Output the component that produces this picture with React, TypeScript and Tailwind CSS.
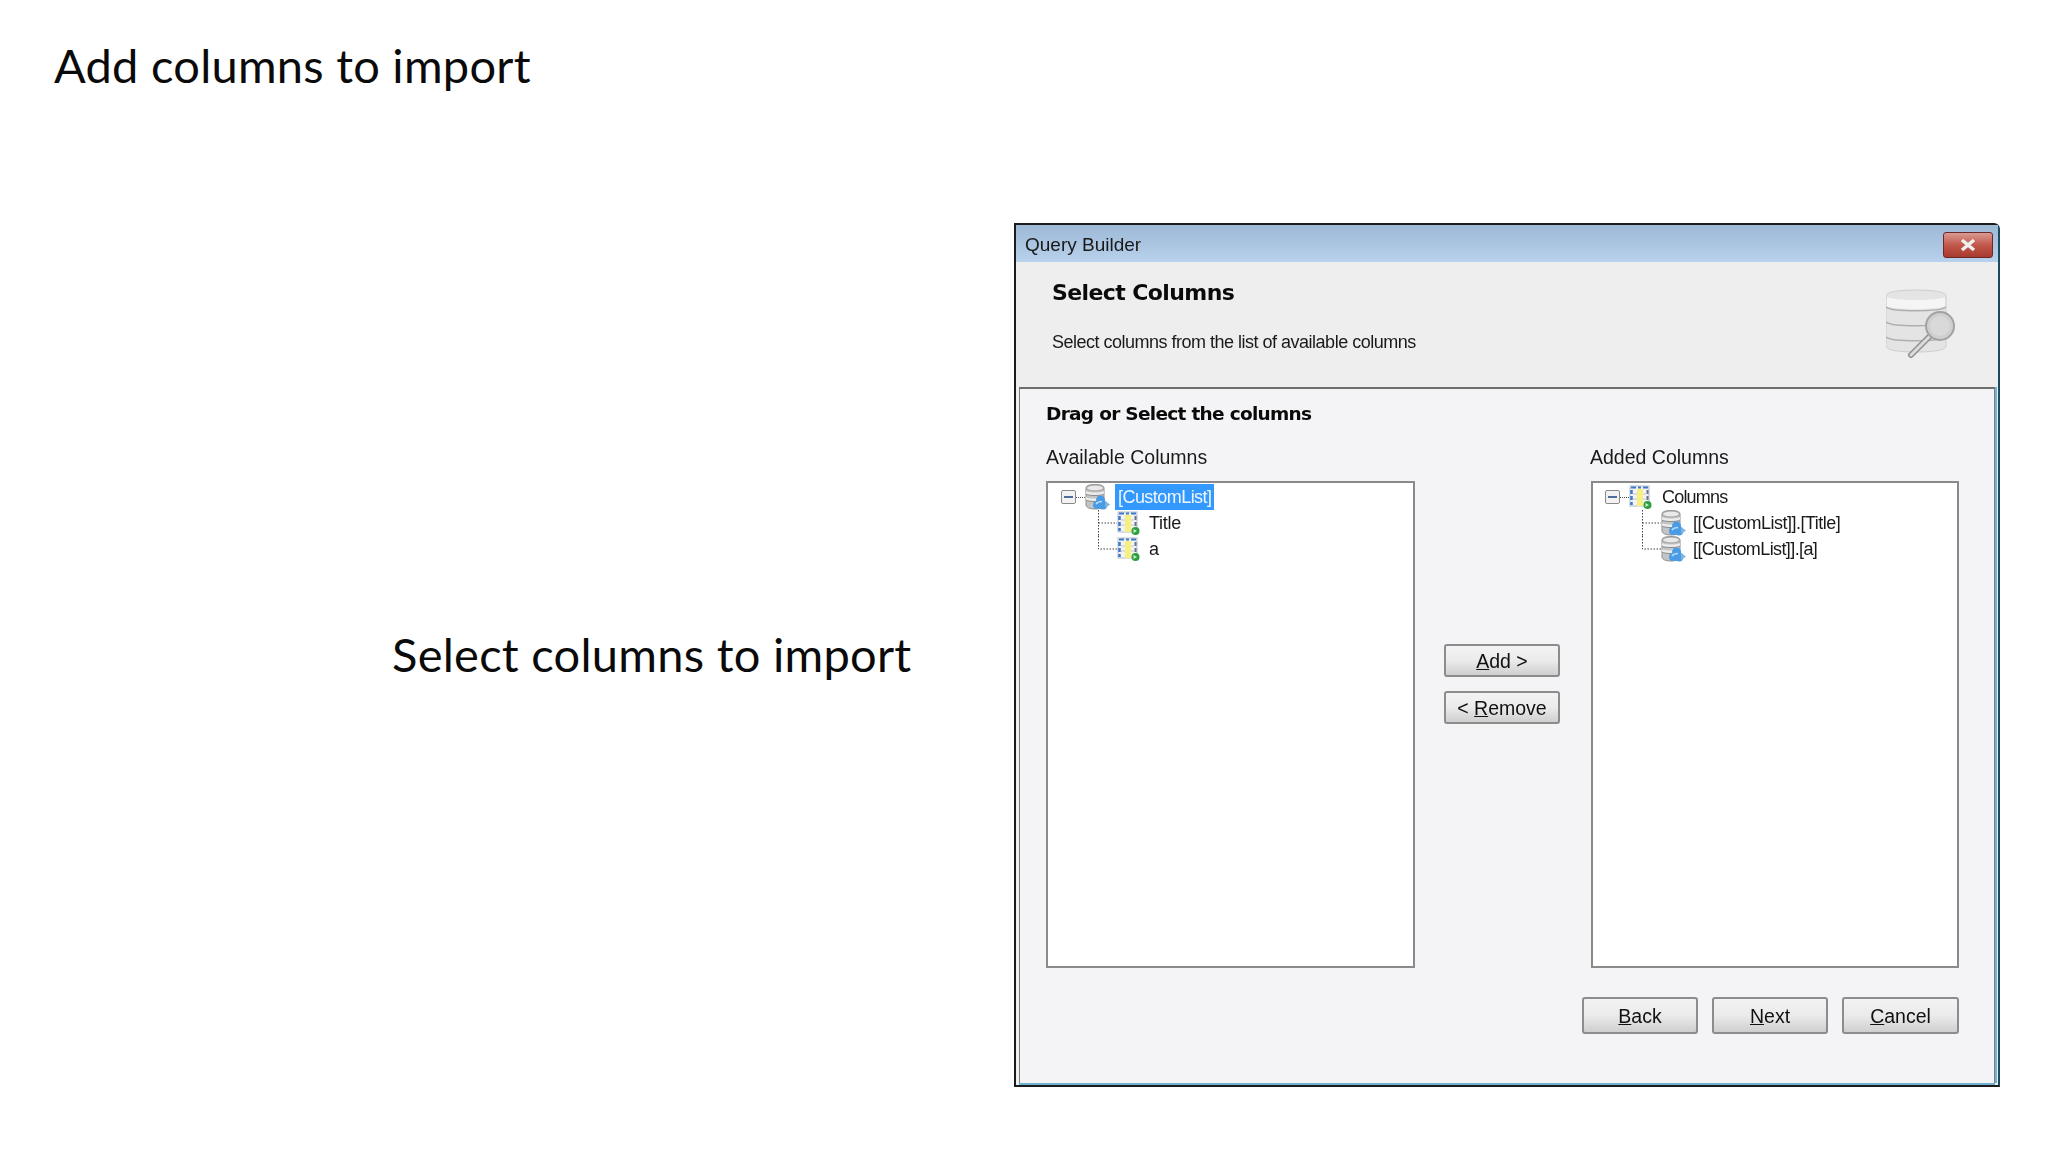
function DbIcon() {
  return (
    <svg width="26" height="26" viewBox="0 0 26 26" className="shrink-0">
      <path d="M1 4c0-2.500 4-3.500 9-3.500s9 1 9 3.500v17c0 2.500-4 4-9 4s-9-1.500-9-4z" fill="#c4c4c4" stroke="#8f8f8f" />
      <ellipse cx="10" cy="4" rx="8.500" ry="3" fill="#e9e9e9" stroke="#a0a0a0" />
      <path d="M1 7v3c2 2 16 2 18 0V7c-2 2-16 2-18 0zM1 13v3c2 2 16 2 18 0v-3c-2 2-16 2-18 0z" fill="#ededed" />
      <path d="M1 10c2 2 16 2 18 0M1 16c2 2 16 2 18 0" fill="none" stroke="#8a8a8a" />
      <circle cx="15.500" cy="16" r="4.500" fill="#4a9be6" />
      <circle cx="12" cy="21" r="4" fill="#4a9be6" />
      <circle cx="18" cy="21" r="4.500" fill="#4a9be6" />
      <path d="M20 17l5 3.500-5 3.500z" fill="#7fb4e0" />
      <path d="M11 20c1-1.500 4-2.500 6-2.500" fill="none" stroke="#b5dcf8" strokeWidth="1.500" />
    </svg>
  )
}

function ColumnIcon() {
  return (
    <svg width="24" height="26" viewBox="0 0 24 26" className="shrink-0">
      <rect x="1" y="2" width="19" height="20" fill="#f1f3f6" stroke="#b3bcc9" />
      <path d="M2 3.500h5M9 3.500h3M14 3.500h5" stroke="#3f78c8" strokeWidth="2" />
      <path d="M2.500 6v4M2.500 12v4M2.500 18v3" stroke="#3f78c8" strokeWidth="2.500" />
      <path d="M18.500 6v4M18.500 12v4" stroke="#6a7687" strokeWidth="2" />
      <rect x="8" y="5" width="6" height="17" fill="#f8f07e" />
      <path d="M4 10h4M4 15h4M14 10h3M14 15h3" stroke="#c2c8d2" />
      <circle cx="18.500" cy="21" r="4" fill="#2f9e3f" />
      <path d="M16.500 19l3.500 2-3.500 2z" fill="#c8f0c8" />
    </svg>
  )
}

function SearchDbIcon() {
  return (
    <svg width="70" height="70" viewBox="0 0 70 70" className="shrink-0">
      <path d="M0 7c0-4 12-6 30-6s30 2 30 6v50c0 4-12 6-30 6S0 61 0 57z" fill="#e4e4e4" stroke="#cdcdcd" />
      <path d="M1 8c4 4 54 4 58 0v9c-4 4-54 4-58 0z" fill="#f5f5f5" />
      <path d="M0 18c6 5 54 5 60 0M0 33c6 5 54 5 60 0M0 48c6 5 54 5 60 0" fill="none" stroke="#afafaf" strokeWidth="1.500" />
      <path d="M44 47 25 66" stroke="#8f8f8f" strokeWidth="6" strokeLinecap="round" />
      <path d="M44 47 25 66" stroke="#dcdcdc" strokeWidth="3" strokeLinecap="round" />
      <circle cx="54" cy="37" r="14" fill="#cfcfcf" stroke="#a2a2a2" strokeWidth="2" />
      <circle cx="54" cy="37" r="10" fill="#d9d9d9" />
    </svg>
  )
}

function Expander() {
  return (
    <span className="flex h-[14px] w-[15px] shrink-0 items-center justify-center rounded-[2px] border border-[#8a8a8a] bg-[#f2f2f2]">
      <span className="h-[2px] w-[9px] bg-[#4d6d9a]" />
    </span>
  )
}

// dotted elbow from the parent icon down to a child row
function Connector({ last }: { last?: boolean }) {
  return (
    <svg width="19" height="26" viewBox="0 0 19 26" className="shrink-0">
      <path d={last ? 'M0.500 0V13H19' : 'M0.500 0V26M0.500 13H19'} fill="none" stroke="#444" strokeDasharray="1.500 1.500" />
    </svg>
  )
}

function WinButton({ children, className }: { children: React.ReactNode; className: string }) {
  return (
    <button className={`flex items-center justify-center rounded-[3px] border-2 border-[#8c8c8c] bg-gradient-to-b from-[#f3f3f3] via-[#ebebeb] to-[#cfcfcf] pt-[3px] text-[19.5px] text-[#111] ${className}`}>
      {children}
    </button>
  )
}

export default function App() {
  return (
    <div className="relative h-[1152px] w-[2048px] overflow-hidden bg-white font-['Liberation_Sans',sans-serif]">
      <h1 className="pl-[54px] pt-[33px] font-['Lato',sans-serif] text-[47px] font-normal leading-[64px] tracking-[0.25px] text-[#0a0a0a]">
        Add columns to import
      </h1>

      <div className="mt-[126px] flex items-center">
        <p className="ml-[392px] w-[622px] pb-[2px] font-['Lato',sans-serif] text-[47px] leading-[62px] tracking-[0.27px] text-[#0a0a0a]">
          Select columns to import
        </p>

        {/* Query Builder window */}
        <div className="flex h-[864px] w-[986px] flex-col rounded-tr-[6px] border-2 border-[#1c1c1c] border-r-[#1b4a5e] bg-[#eff0f2] blur-[0.35px]">
          <div className="flex h-[37px] items-center justify-between bg-gradient-to-b from-[#9db9d6] to-[#b8d1ec] pl-[9px] pr-[5px]">
            <span className="mt-[3px] text-[19px] text-[#1a1a1a]">Query Builder</span>
            <button className="mt-[3px] flex h-[26px] w-[50px] items-center justify-center rounded-[3px] border border-[#6b2a2a] bg-gradient-to-b from-[#d99a92] via-[#c2574b] to-[#a93a2e]">
              <svg width="18" height="14" viewBox="0 0 18 14">
                <path d="M3 2 15 12M15 2 3 12" stroke="#f0f0f0" strokeWidth="3.500" />
              </svg>
            </button>
          </div>

          <div className="flex h-[125px] justify-between bg-[#eeeeef] pl-[36px] pr-[42px]">
            <div>
              <h2 className="pt-[17px] font-['DejaVu_Sans',sans-serif] text-[22px] font-bold leading-[28px] tracking-[-0.6px] text-[#0a0a0a]">
                Select Columns
              </h2>
              <p className="mt-[24px] text-[18px] leading-[22px] tracking-[-0.5px] text-[#1a1a1a]">
                Select columns from the list of available columns
              </p>
            </div>
            <div className="pt-[27px]">
              <SearchDbIcon />
            </div>
          </div>

          <div className="mx-[3px] flex-1 border-x border-t-2 border-x-[#7d7d7d] border-t-[#6d6d6d] bg-[#f4f4f6] pl-[26px] pt-[13px] shadow-[2px_0_0_#6fb3d2]">
            <h3 className="font-['DejaVu_Sans',sans-serif] text-[18.5px] font-bold leading-[24px] tracking-[-0.7px] text-[#0a0a0a]">
              Drag or Select the columns
            </h3>

            <div className="mt-[20px] flex">
              <div className="w-[369px]">
                <div className="text-[19.5px] leading-[22px] text-[#1a1a1a]">Available Columns</div>
                <div className="mt-[13px] h-[487px] border-2 border-[#8a8a8a] bg-white pl-[13px] pt-[1px] text-[18px] text-[#1a1a1a]">
                  <div className="flex h-[26px] items-center">
                    <Expander />
                    <span className="w-[9px] border-t border-dotted border-[#555]" />
                    <DbIcon />
                    <span className="ml-[4px] flex h-[26px] items-center bg-[#3399ff] px-[3px] tracking-[-0.55px] text-[#eef6ff]">[CustomList]</span>
                  </div>
                  <div className="flex h-[26px] items-center pl-[37px]">
                    <Connector />
                    <ColumnIcon />
                    <span className="ml-[8px] tracking-[-0.3px]">Title</span>
                  </div>
                  <div className="flex h-[26px] items-center pl-[37px]">
                    <Connector last />
                    <ColumnIcon />
                    <span className="ml-[8px]">a</span>
                  </div>
                </div>
              </div>

              <div className="ml-[29px] flex w-[116px] flex-col gap-[14px] pt-[198px]">
                <WinButton className="h-[33px] w-[116px]">
                  <span><u>A</u>dd &gt;</span>
                </WinButton>
                <WinButton className="h-[33px] w-[116px]">
                  <span>&lt; <u>R</u>emove</span>
                </WinButton>
              </div>

              <div className="ml-[31px] w-[368px]">
                <div className="-ml-[1px] text-[19.5px] leading-[22px] text-[#1a1a1a]">Added Columns</div>
                <div className="mt-[13px] h-[487px] border-2 border-[#8a8a8a] bg-white pl-[12px] pt-[1px] text-[18px] text-[#1a1a1a]">
                  <div className="flex h-[26px] items-center">
                    <Expander />
                    <span className="w-[9px] border-t border-dotted border-[#555]" />
                    <ColumnIcon />
                    <span className="ml-[9px] tracking-[-0.8px]">Columns</span>
                  </div>
                  <div className="flex h-[26px] items-center pl-[37px]">
                    <Connector />
                    <DbIcon />
                    <span className="ml-[6px] tracking-[-0.5px]">[[CustomList]].[Title]</span>
                  </div>
                  <div className="flex h-[26px] items-center pl-[37px]">
                    <Connector last />
                    <DbIcon />
                    <span className="ml-[6px] tracking-[-0.6px]">[[CustomList]].[a]</span>
                  </div>
                </div>
              </div>
            </div>

            <div className="mt-[29px] flex justify-end gap-[14px] pr-[35px]">
              <WinButton className="h-[37px] w-[116px]">
                <span><u>B</u>ack</span>
              </WinButton>
              <WinButton className="h-[37px] w-[116px]">
                <span><u>N</u>ext</span>
              </WinButton>
              <WinButton className="h-[37px] w-[117px]">
                <span><u>C</u>ancel</span>
              </WinButton>
            </div>
          </div>

          <div className="mx-[3px] h-[2px] bg-[#6fb3d2]" />
        </div>
      </div>
    </div>
  )
}
